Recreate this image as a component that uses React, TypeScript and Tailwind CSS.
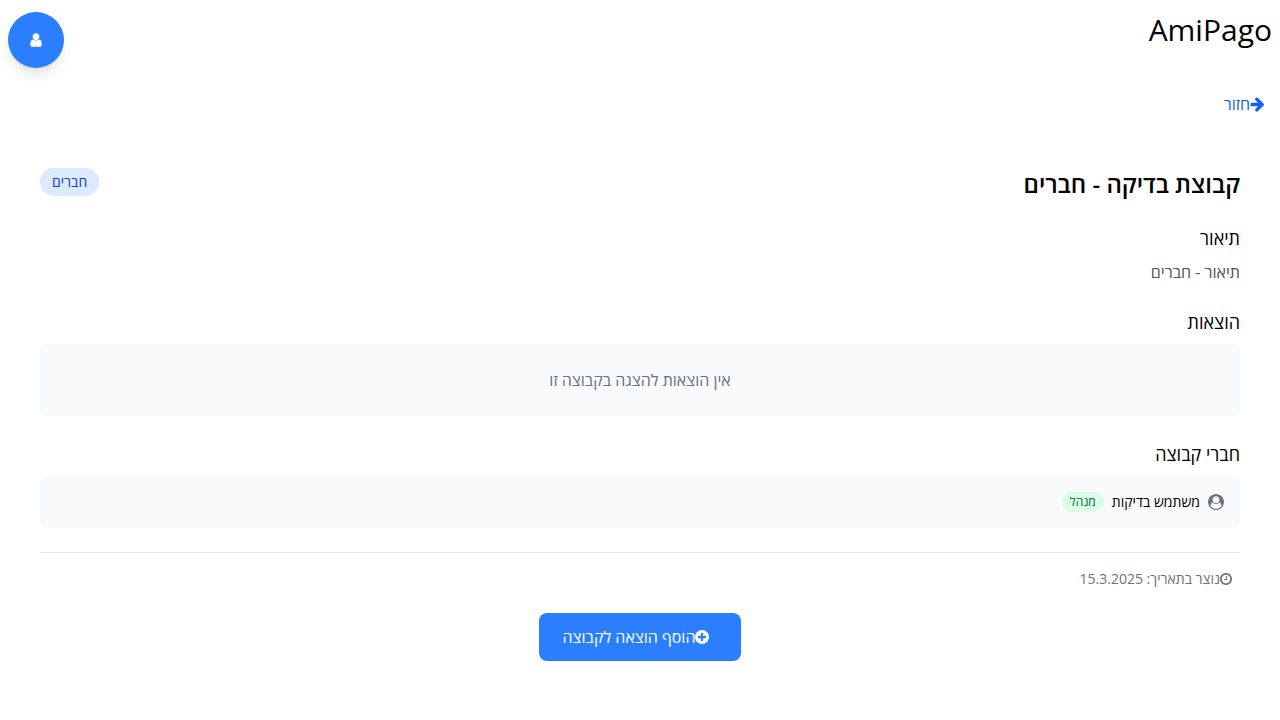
import React from "react";

const icons = {
  user: "M1536 1399q0 109-62.5 187t-150.5 78h-854q-88 0-150.5-78t-62.5-187q0-85 8.5-160.5t31.5-152 58.5-131 94-89 134.5-34.5q131 128 313 128t313-128q76 0 134.5 34.5t94 89 58.5 131 31.5 152 8.5 160.5zm-256-887q0 159-112.5 271.5t-271.5 112.5-271.5-112.5-112.5-271.5 112.5-271.5 271.5-112.5 271.5 112.5 112.5 271.5z",
  arrow: "M1664 960q0 54-37 91l-651 651q-39 37-91 37-51 0-90-37l-75-75q-38-38-38-91t38-91l293-293h-704q-52 0-84.5-37.5t-32.5-90.5v-128q0-53 32.5-90.5t84.5-37.5h704l-293-294q-38-36-38-90t38-90l75-75q38-38 90-38 53 0 91 38l651 651q37 35 37 90z",
  plus: "M1344 960v-128q0-26-19-45t-45-19h-256v-256q0-26-19-45t-45-19h-128q-26 0-45 19t-19 45v256h-256q-26 0-45 19t-19 45v128q0 26 19 45t45 19h256v256q0 26 19 45t45 19h128q26 0 45-19t19-45v-256h256q26 0 45-19t19-45zm320-64q0 209-103 385.5t-279.5 279.5-385.5 103-385.5-103-279.5-279.5-103-385.5 103-385.5 279.5-279.5 385.5-103 385.5 103 279.5 279.5 103 385.5z",
  clock: "M1024 544v448q0 14-9 23t-23 9h-320q-14 0-23-9t-9-23v-64q0-14 9-23t23-9h224v-352q0-14 9-23t23-9h64q14 0 23 9t9 23zm416 352q0-148-73-273t-198-198-273-73-273 73-198 198-73 273 73 273 198 198 273 73 273-73 198-198 73-273zm224 0q0 209-103 385.5t-279.5 279.5-385.5 103-385.5-103-279.5-279.5-103-385.5 103-385.5 279.5-279.5 385.5-103 385.5 103 279.5 279.5 103 385.5z",
  account: "M1523 1339q-22-155-87.5-257.5t-184.5-118.5q-67 74-159.5 115.5t-195.5 41.5-195.5-41.5-159.5-115.5q-119 16-184.5 118.5t-87.5 257.5q106 150 271 237.5t356 87.5 356-87.5 271-237.5zm-243-699q0-159-112.5-271.5t-271.5-112.5-271.5 112.5-112.5 271.5 112.5 271.5 271.5 112.5 271.5-112.5 112.5-271.5zm512 256q0 182-71 347.5t-190.5 286-285.5 191.5-349 71q-182 0-348-71t-286-191-191-286-71-348 71-348 191-286 286-191 348-71 348 71 286 191 191 286 71 348z",
};

type IconProps = { name: keyof typeof icons; viewBox?: string; className: string };

function Icon({ name, viewBox = "0 0 1792 1792", className }: IconProps) {
  return (
    <svg viewBox={viewBox} fill="currentColor" fillRule="evenodd" aria-hidden="true" className={className}>
      <path d={icons[name]} />
    </svg>
  );
}

export default function App() {
  return (
    <div dir="rtl" lang="he" className="font-['Open_Sans',sans-serif] text-black">
      <header className="flex items-start justify-between px-2 pt-3">
        <h1 className="text-3xl">AmiPago</h1>
        <button aria-label="פרופיל" className="flex size-14 items-center justify-center rounded-full bg-[#2b7fff] text-white shadow-lg">
          <Icon name="user" className="size-4" />
        </button>
      </header>
      <main>
        <a href="#" className="mt-6 flex w-fit items-center px-4 text-[#155dfc]">
          <Icon name="arrow" viewBox="128 128 1536 1536" className="size-3.5 overflow-visible" />
          <span>חזור</span>
        </a>
        <section className="px-10 pt-13">
          <div className="mb-6 flex items-start justify-between">
            <h2 className="text-2xl font-semibold">קבוצת בדיקה - חברים</h2>
            <span className="rounded-full bg-blue-100 px-3 py-1 text-sm text-blue-800">חברים</span>
          </div>
          <h3 className="mb-2 text-lg font-medium">תיאור</h3>
          <p className="mb-6 text-gray-600">תיאור - חברים</p>
          <h3 className="mb-2 text-lg font-medium">הוצאות</h3>
          <p className="mb-6 rounded bg-gray-50 p-6 text-center text-gray-500">אין הוצאות להצגה בקבוצה זו</p>
          <h3 className="mb-2 text-lg font-medium">חברי קבוצה</h3>
          <ul className="rounded-lg bg-gray-50 p-4">
            <li className="flex items-center gap-2 text-sm">
              <Icon name="account" className="size-4 text-gray-500" />
              <span>משתמש בדיקות</span>
              <span className="rounded-full bg-green-100 px-2 py-0.5 text-xs text-green-800">מנהל</span>
            </li>
          </ul>
          <div className="mt-6 flex items-center border-t border-gray-200 px-2 pt-4 text-sm text-gray-500">
            <Icon name="clock" viewBox="128 128 1536 1536" className="size-3" />
            <span>נוצר בתאריך: 15.3.2025</span>
          </div>
          <div className="mt-6 flex justify-center">
            <button className="flex items-center rounded-lg bg-[#2b7fff] py-3 ps-8 pe-6 text-white">
              <Icon name="plus" viewBox="128 128 1536 1536" className="size-3.5" />
              <span>הוסף הוצאה לקבוצה</span>
            </button>
          </div>
        </section>
      </main>
    </div>
  );
}
